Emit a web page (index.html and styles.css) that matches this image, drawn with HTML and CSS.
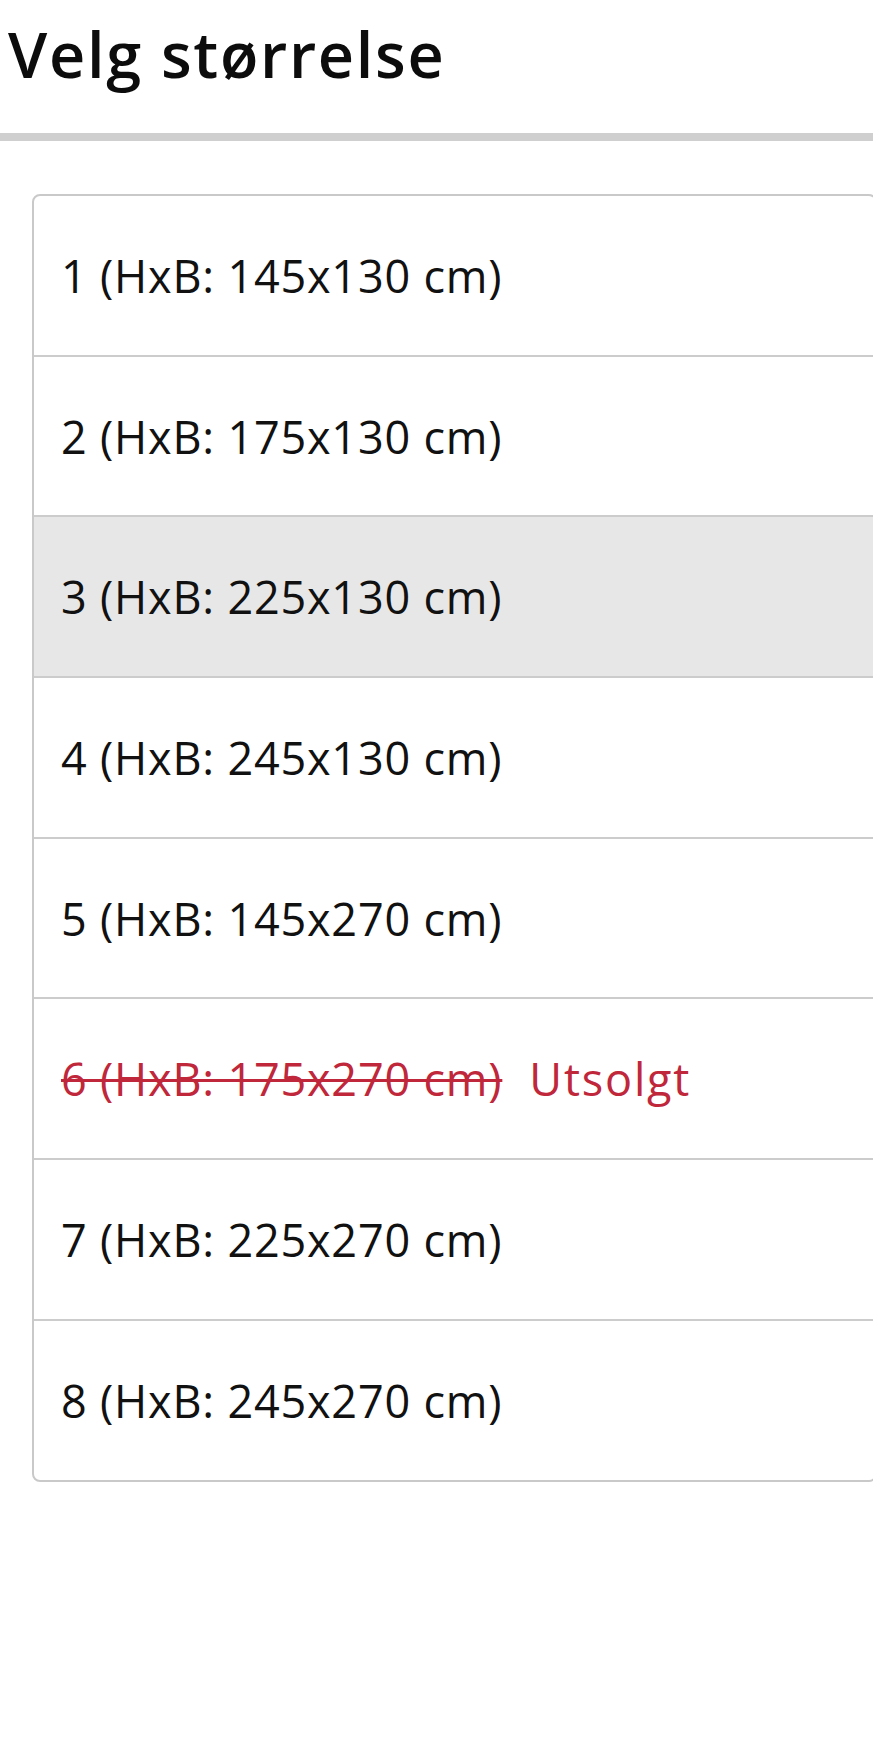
FILE: index.html
```html
<!DOCTYPE html>
<html lang="no">
<head>
<meta charset="utf-8">
<title>Velg størrelse</title>
<link rel="stylesheet" href="styles.css">
</head>
<body>
<header class="header">
  <h1 class="title">Velg størrelse</h1>
</header>
<ul class="sizes">
  <li class="size">1 (HxB: 145x130 cm)</li>
  <li class="size">2 (HxB: 175x130 cm)</li>
  <li class="size size--active">3 (HxB: 225x130 cm)</li>
  <li class="size">4 (HxB: 245x130 cm)</li>
  <li class="size">5 (HxB: 145x270 cm)</li>
  <li class="size size--soldout"><s class="size__name">6 (HxB: 175x270 cm)</s><span class="size__note">Utsolgt</span></li>
  <li class="size">7 (HxB: 225x270 cm)</li>
  <li class="size">8 (HxB: 245x270 cm)</li>
</ul>
</body>
</html>
```

FILE: styles.css
```css
html, body {
  margin: 0;
  padding: 0;
  background: #ffffff;
  overflow-x: hidden;
}

body {
  font-family: "Open Sans", "Noto Sans", sans-serif;
  color: #111111;
}

.header {
  height: 133px;
  border-bottom: 8px solid #cfcfcf;
  box-sizing: content-box;
  display: flex;
  align-items: flex-start;
}

.title {
  margin: 0;
  padding: 14px 0 0 8px;
  font-size: 63px;
  font-weight: 600;
  letter-spacing: 1.7px;
  line-height: 80px;
  color: #0c0c0c;
}

.sizes {
  list-style: none;
  margin: 53px -4px 0 32px;
  padding: 0;
  border: 2px solid #c9c9c9;
  border-radius: 8px;
  overflow: hidden;
}

.size {
  height: 160.7px;
  box-sizing: border-box;
  display: flex;
  align-items: center;
  gap: 27px;
  padding-left: 27px;
  font-size: 45px;
  letter-spacing: 0.8px;
  color: #111111;
  border-bottom: 2px solid #cccccc;
}

.size:last-child {
  border-bottom: none;
  height: 158.7px;
}

.size--active {
  background: #e7e7e7;
}

.size--soldout {
  color: #c0273a;
}

.size__name {
  text-decoration-thickness: 3px;
}

.size__note {
  letter-spacing: 1.8px;
}
```
